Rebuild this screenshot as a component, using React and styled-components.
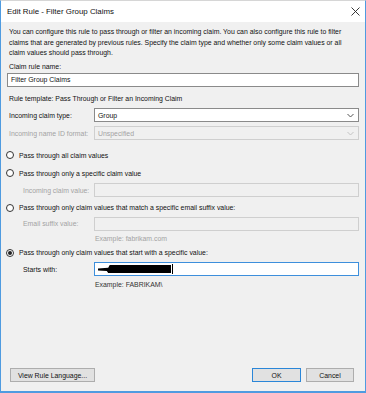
import React from "react";
import styled, { createGlobalStyle, css } from "styled-components";

const Global = createGlobalStyle`
  html, body { margin: 0; padding: 0; background: #ffffff; }
  body { font-family: "Liberation Sans", Arial, sans-serif; color: #111; }
`;

const Window = styled.div`
  width: 366px;
  height: 393px;
  box-sizing: border-box;
  display: flex;
  flex-direction: column;
  border-left: 1px solid #4f9be0;
  border-right: 1px solid #4f9be0;
  border-bottom: 2px solid #4f9be0;
  border-top: 1px solid #d6d6d6;
`;

const TitleBar = styled.div`
  height: 21px;
  background: #ffffff;
  display: flex;
  align-items: center;
  justify-content: space-between;
  padding: 0 5px 0 6px;
  font-size: 7.9px;
  color: #111;
`;

const Body = styled.div`
  flex: 1;
  background: #f0f0f0;
  display: flex;
  flex-direction: column;
  padding: 0 6px;
  font-size: 6.9px;
`;

const Description = styled.div`
  margin-top: 5px;
  line-height: 10.5px;
  padding-left: 2px;
  white-space: nowrap;
`;

const Label = styled.div`
  line-height: 11px;
  height: 11px;
  padding-left: 2px;
  margin-top: ${(p) => p.$mt || 0}px;
  color: ${(p) => (p.$disabled ? "#a3a3a3" : "#111")};
  white-space: nowrap;
`;

const fieldBase = css`
  height: 14px;
  box-sizing: border-box;
  display: flex;
  align-items: center;
  padding: 0 3px;
  white-space: nowrap;
`;

const TextBox = styled.div`
  ${fieldBase};
  margin-top: ${(p) => p.$mt || 0}px;
  border: 1px solid ${(p) => (p.$focused ? "#3d8fdc" : p.$disabled ? "#cfcfcf" : "#8a8a8a")};
  background: ${(p) => (p.$disabled ? "#f0f0f0" : "#ffffff")};
  color: ${(p) => (p.$disabled ? "#a3a3a3" : "#111")};
`;

const Combo = styled(TextBox)`
  justify-content: space-between;
  padding-right: 4px;
`;

const FormRow = styled.div`
  display: grid;
  grid-template-columns: 87px 1fr;
  align-items: center;
  margin-top: ${(p) => p.$mt || 0}px;
`;

const RowLabel = styled.div`
  padding-left: ${(p) => (p.$indent ? 16 : 2)}px;
  color: ${(p) => (p.$disabled ? "#a3a3a3" : "#111")};
  white-space: nowrap;
`;

const RadioRow = styled.div`
  display: flex;
  align-items: center;
  gap: 5px;
  height: 11px;
  margin-left: -1px;
  margin-top: ${(p) => p.$mt || 0}px;
  white-space: nowrap;
`;

const RadioCircle = styled.span`
  width: 8px;
  height: 8px;
  box-sizing: border-box;
  border-radius: 50%;
  border: 1px solid #333;
  background: #fff;
  display: flex;
  align-items: center;
  justify-content: center;
  flex: none;
  &::after {
    content: "";
    display: ${(p) => (p.$checked ? "block" : "none")};
    width: 4px;
    height: 4px;
    border-radius: 50%;
    background: #222;
  }
`;

const Hint = styled.div`
  line-height: 11px;
  height: 11px;
  margin-left: 88px;
  margin-top: ${(p) => p.$mt || 0}px;
  color: ${(p) => (p.$disabled ? "#a3a3a3" : "#333")};
`;

const Redaction = styled.span`
  display: inline-block;
  width: 73px;
  height: 8px;
  background: #000;
  clip-path: polygon(0 45%, 14% 35%, 16% 0, 100% 0, 100% 100%, 14% 100%, 12% 75%, 0 70%);
`;

const Caret = styled.span`
  display: inline-block;
  width: 1px;
  height: 10px;
  background: #000;
  margin-left: 1px;
`;

const Footer = styled.div`
  margin-top: auto;
  display: flex;
  justify-content: space-between;
  align-items: center;
  padding: 0 5px 9px 3px;
`;

const ButtonGroup = styled.div`
  display: flex;
  gap: 5px;
`;

const Button = styled.div`
  width: ${(p) => p.$w}px;
  height: 14px;
  box-sizing: border-box;
  border: 1px solid ${(p) => (p.$default ? "#2a86d8" : "#adadad")};
  background: #e1e1e1;
  display: flex;
  align-items: center;
  justify-content: center;
  font-size: 6.9px;
  color: #111;
  white-space: nowrap;
`;

const Chevron = ({ disabled }) => (
  <svg width="7" height="5" viewBox="0 0 7 5">
    <polyline
      points="0.5,1 3.5,4 6.5,1"
      fill="none"
      stroke={disabled ? "#c4c4c4" : "#555"}
      strokeWidth="1"
    />
  </svg>
);

const CloseIcon = () => (
  <svg width="9" height="9" viewBox="0 0 9 9">
    <line x1="0.5" y1="0.5" x2="8.5" y2="8.5" stroke="#222" strokeWidth="0.9" />
    <line x1="8.5" y1="0.5" x2="0.5" y2="8.5" stroke="#222" strokeWidth="0.9" />
  </svg>
);

export default function App() {
  return (
    <>
      <Global />
      <Window>
        <TitleBar>
          <span>Edit Rule - Filter Group Claims</span>
          <CloseIcon />
        </TitleBar>
        <Body>
          <Description>
            You can configure this rule to pass through or filter an incoming claim. You can also configure this rule to filter
            <br />
            claims that are generated by previous rules. Specify the claim type and whether only some claim values or all
            <br />
            claim values should pass through.
          </Description>

          <Label $mt={2}>Claim rule name:</Label>
          <TextBox $mt={1}>Filter Group Claims</TextBox>

          <Label $mt={6}>Rule template: Pass Through or Filter an Incoming Claim</Label>

          <FormRow $mt={4.5}>
            <RowLabel>Incoming claim type:</RowLabel>
            <Combo>
              <span>Group</span>
              <Chevron />
            </Combo>
          </FormRow>
          <FormRow $mt={4}>
            <RowLabel $disabled>Incoming name ID format:</RowLabel>
            <Combo $disabled>
              <span>Unspecified</span>
              <Chevron disabled />
            </Combo>
          </FormRow>

          <RadioRow $mt={9.5}>
            <RadioCircle />
            <span>Pass through all claim values</span>
          </RadioRow>

          <RadioRow $mt={7}>
            <RadioCircle />
            <span>Pass through only a specific claim value</span>
          </RadioRow>
          <FormRow $mt={4.5}>
            <RowLabel $indent $disabled>Incoming claim value:</RowLabel>
            <TextBox $disabled />
          </FormRow>

          <RadioRow $mt={5}>
            <RadioCircle />
            <span>Pass through only claim values that match a specific email suffix value:</span>
          </RadioRow>
          <FormRow $mt={3.5}>
            <RowLabel $indent $disabled>Email suffix value:</RowLabel>
            <TextBox $disabled />
          </FormRow>
          <Hint $mt={2.5} $disabled>Example: fabrikam.com</Hint>

          <RadioRow $mt={3}>
            <RadioCircle $checked />
            <span>Pass through only claim values that start with a specific value:</span>
          </RadioRow>
          <FormRow $mt={4}>
            <RowLabel $indent>Starts with:</RowLabel>
            <TextBox $focused>
              <Redaction />
              <Caret />
            </TextBox>
          </FormRow>
          <Hint $mt={3}>Example: FABRIKAM\</Hint>

          <Footer>
            <Button $w={85}>View Rule Language...</Button>
            <ButtonGroup>
              <Button $w={49} $default>OK</Button>
              <Button $w={48}>Cancel</Button>
            </ButtonGroup>
          </Footer>
        </Body>
      </Window>
    </>
  );
}
